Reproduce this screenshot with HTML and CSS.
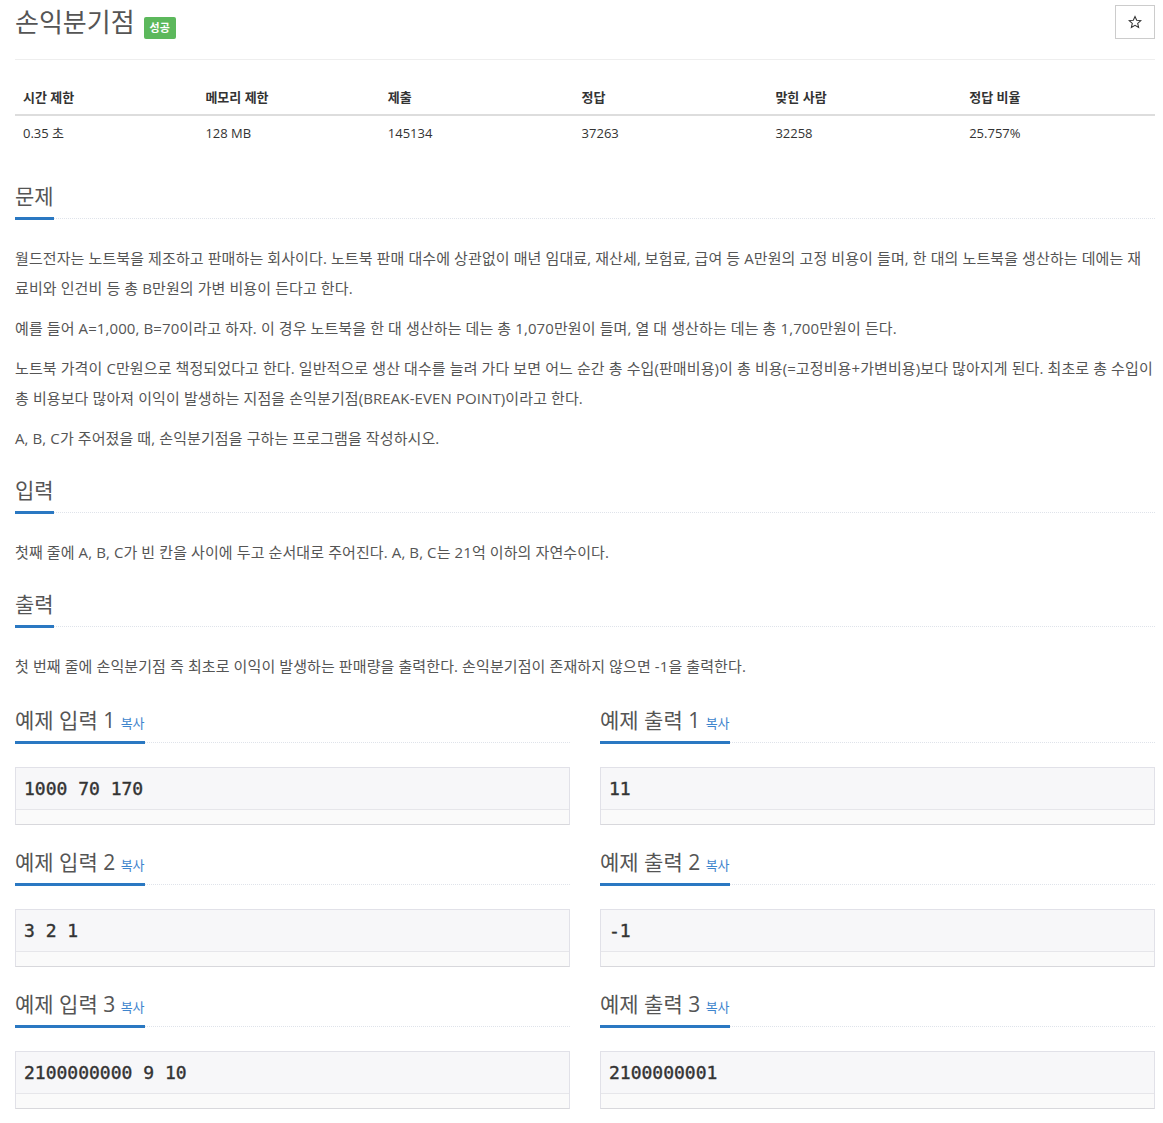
FILE: index.html
```html
<!DOCTYPE html>
<html lang="ko">
<head>
    <meta charset="UTF-8">
    <meta name="viewport" content="width=device-width, initial-scale=1.0">
    <title>손익분기점</title>
    <link rel="stylesheet" href="styles.css">
</head>
<body>
    <div class="container">
        <div class="page-header">
            <div class="title-wrap">
                <h1 class="title">손익분기점</h1>
                <span class="label-success">성공</span>
            </div>
            <button class="star-btn" title="즐겨찾기">
                <svg width="14" height="14" viewBox="0 0 24 24"><polygon points="12,2.5 14.9,9 22,9.6 16.6,14.3 18.2,21.3 12,17.6 5.8,21.3 7.4,14.3 2,9.6 9.1,9" fill="none" stroke="#333" stroke-width="1.8" stroke-linejoin="miter"/></svg>
            </button>
        </div>

        <table class="info-table">
            <thead>
                <tr>
                    <th style="width: 16%">시간 제한</th>
                    <th style="width: 16%">메모리 제한</th>
                    <th style="width: 17%">제출</th>
                    <th style="width: 17%">정답</th>
                    <th style="width: 17%">맞힌 사람</th>
                    <th style="width: 17%">정답 비율</th>
                </tr>
            </thead>
            <tbody>
                <tr>
                    <td>0.35 초</td>
                    <td>128 MB</td>
                    <td>145134</td>
                    <td>37263</td>
                    <td>32258</td>
                    <td>25.757%</td>
                </tr>
            </tbody>
        </table>

        <section class="problem-section">
            <div class="headline"><h2>문제</h2></div>
            <div class="problem-text">
                <p>월드전자는 노트북을 제조하고 판매하는 회사이다. 노트북 판매 대수에 상관없이 매년 임대료, 재산세, 보험료, 급여 등 A만원의 고정 비용이 들며, 한 대의 노트북을 생산하는 데에는 재료비와 인건비 등 총 B만원의 가변 비용이 든다고 한다.</p>
                <p>예를 들어 A=1,000, B=70이라고 하자. 이 경우 노트북을 한 대 생산하는 데는 총 1,070만원이 들며, 열 대 생산하는 데는 총 1,700만원이 든다.</p>
                <p>노트북 가격이 C만원으로 책정되었다고 한다. 일반적으로 생산 대수를 늘려 가다 보면 어느 순간 총 수입(판매비용)이 총 비용(=고정비용+가변비용)보다 많아지게 된다. 최초로 총 수입이 총 비용보다 많아져 이익이 발생하는 지점을 손익분기점(BREAK-EVEN POINT)이라고 한다.</p>
                <p>A, B, C가 주어졌을 때, 손익분기점을 구하는 프로그램을 작성하시오.</p>
            </div>
        </section>

        <section class="problem-section">
            <div class="headline"><h2>입력</h2></div>
            <div class="problem-text">
                <p>첫째 줄에 A, B, C가 빈 칸을 사이에 두고 순서대로 주어진다. A, B, C는 21억 이하의 자연수이다.</p>
            </div>
        </section>

        <section class="problem-section">
            <div class="headline"><h2>출력</h2></div>
            <div class="problem-text">
                <p>첫 번째 줄에 손익분기점 즉 최초로 이익이 발생하는 판매량을 출력한다. 손익분기점이 존재하지 않으면 -1을 출력한다.</p>
            </div>
        </section>

        <div class="samples">
            <section class="sample">
                <div class="headline"><h2>예제 입력 1 <a href="#" class="copy">복사</a></h2></div>
                <div class="sampledata"><pre>1000 70 170</pre><div class="scroll"></div></div>
            </section>
            <section class="sample">
                <div class="headline"><h2>예제 출력 1 <a href="#" class="copy">복사</a></h2></div>
                <div class="sampledata"><pre>11</pre><div class="scroll"></div></div>
            </section>
            <section class="sample">
                <div class="headline"><h2>예제 입력 2 <a href="#" class="copy">복사</a></h2></div>
                <div class="sampledata"><pre>3 2 1</pre><div class="scroll"></div></div>
            </section>
            <section class="sample">
                <div class="headline"><h2>예제 출력 2 <a href="#" class="copy">복사</a></h2></div>
                <div class="sampledata"><pre>-1</pre><div class="scroll"></div></div>
            </section>
            <section class="sample">
                <div class="headline"><h2>예제 입력 3 <a href="#" class="copy">복사</a></h2></div>
                <div class="sampledata"><pre>2100000000 9 10</pre><div class="scroll"></div></div>
            </section>
            <section class="sample">
                <div class="headline"><h2>예제 출력 3 <a href="#" class="copy">복사</a></h2></div>
                <div class="sampledata"><pre>2100000001</pre><div class="scroll"></div></div>
            </section>
        </div>
    </div>
</body>
</html>
```

FILE: styles.css
```css
body {
    margin: 0;
    padding: 0;
    background: #fff;
    font-family: "Open Sans", "Noto Sans CJK KR", sans-serif;
    font-size: 15px;
    color: #555;
}
.container {
    width: 1140px;
    margin-left: 15px;
    padding-top: 5px;
}
.page-header {
    display: flex;
    justify-content: space-between;
    align-items: flex-start;
    padding-bottom: 20px;
    border-bottom: 1px solid #eee;
    margin-bottom: 20px;
}
.title-wrap {
    display: flex;
    align-items: flex-start;
}
.title {
    margin: 0;
    font-size: 26px;
    font-weight: 400;
    line-height: 34px;
    color: #555;
}
.label-success {
    margin: 12px 0 0 9px;
    padding: 0 6px;
    height: 22px;
    line-height: 22px;
    font-size: 11px;
    font-weight: 700;
    color: #fff;
    background: #5cb85c;
    border-radius: 2px;
}
.star-btn {
    width: 40px;
    height: 34px;
    padding: 0;
    background: #fff;
    border: 1px solid #ccc;
    display: flex;
    align-items: center;
    justify-content: center;
}
.info-table {
    width: 100%;
    border-collapse: collapse;
    margin-bottom: 19px;
    font-size: 13px;
    color: #333;
}
.info-table th {
    text-align: left;
    font-weight: 700;
    padding: 8px;
    line-height: 18px;
    border-bottom: 2px solid #ddd;
}
.info-table td {
    padding: 8px;
    line-height: 18px;
}
.problem-section {
    margin-top: 10px;
}
.headline {
    display: flex;
    border-bottom: 1px dotted #dfe3ea;
    margin-bottom: 24px;
}
.headline h2 {
    margin: 0 0 -2px 0;
    padding: 10px 0 4px;
    font-size: 21px;
    font-weight: 400;
    line-height: 34px;
    color: #555;
    border-bottom: 3px solid #2a78c2;
}
.copy {
    font-size: 13px;
    line-height: 1;
    color: #3f85cd;
    text-decoration: none;
}
.problem-text p {
    margin: 0 0 10px;
    line-height: 30px;
    letter-spacing: 0.1px;
}
.samples {
    display: grid;
    grid-template-columns: 1fr 1fr;
    column-gap: 30px;
    padding-top: 2px;
}
.sampledata {
    border: 1px solid #e1e1e8;
    border-bottom-color: #d8d8dc;
    background: #f7f7f9;
    margin-bottom: 10px;
}
.sampledata pre {
    margin: 0;
    padding: 9.5px 8px;
    font-family: "DejaVu Sans Mono", "Liberation Mono", monospace;
    font-size: 18px;
    line-height: 22px;
    color: #333;
    -webkit-text-stroke: 0.4px #333;
}
.scroll {
    height: 14px;
    background: #fafafa;
    border-top: 1px solid #e6e6ea;
}
```
